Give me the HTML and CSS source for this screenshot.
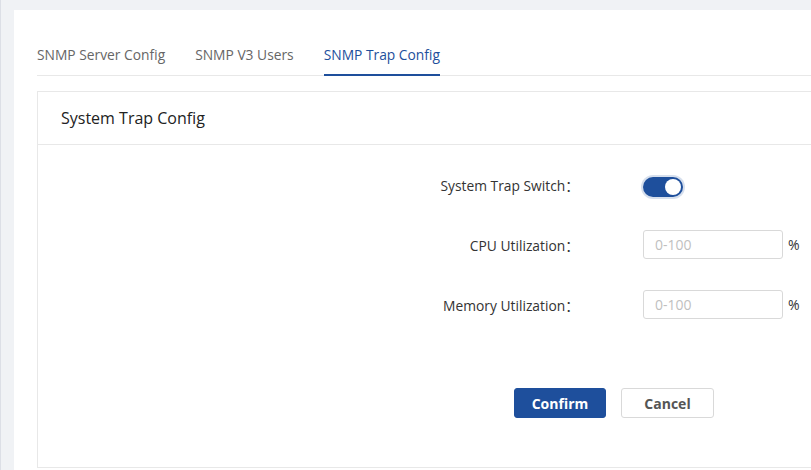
FILE: index.html
```html
<!DOCTYPE html>
<html lang="en">
<head>
<meta charset="UTF-8">
<meta name="viewport" content="width=device-width, initial-scale=1.0">
<title>SNMP Trap Config</title>
<link rel="stylesheet" href="styles.css">
</head>
<body>

<div class="page">
    <div class="card">
        <div class="tabs">
            <div class="tab">SNMP Server Config</div>
            <div class="tab">SNMP V3 Users</div>
            <div class="tab active">SNMP Trap Config</div>
        </div>

        <div class="panel">
            <div class="panel-header">System Trap Config</div>
            <form class="panel-body" id="trapForm">
                <div class="form-row">
                    <label>System Trap Switch：</label>
                    <div class="control">
                        <span class="switch on"><span class="knob"></span></span>
                    </div>
                </div>
                <div class="form-row">
                    <label for="cpu">CPU Utilization：</label>
                    <div class="control">
                        <input type="text" id="cpu" placeholder="0-100">
                        <span class="unit">%</span>
                    </div>
                </div>
                <div class="form-row">
                    <label for="memory">Memory Utilization：</label>
                    <div class="control">
                        <input type="text" id="memory" placeholder="0-100">
                        <span class="unit">%</span>
                    </div>
                </div>

                <div class="button-group">
                    <button type="button" class="btn primary">Confirm</button>
                    <button type="button" class="btn">Cancel</button>
                </div>
            </form>
        </div>
    </div>
</div>

</body>
</html>
```

FILE: styles.css
```css
body {
  margin: 0;
  font-family: "Open Sans", "Noto Sans CJK SC", sans-serif;
  font-size: 14px;
  color: #333;
  background-color: #f0f2f5;
  overflow: hidden;
}

.page {
  height: 470px;
  border-left: 1px solid #dcdfe6;
  padding: 10px 0 0 13px;
  box-sizing: border-box;
}

.card {
  width: 1000px;
  height: 460px;
  padding: 25px 0 0 23px;
  background-color: #fff;
  box-sizing: border-box;
}

.tabs {
  display: flex;
  gap: 30px;
  border-bottom: 1px solid #e8e8e8;
}

.tab {
  height: 39px;
  line-height: 40px;
  font-size: 13.8px;
  color: #666;
  border-bottom: 2px solid transparent;
  margin-bottom: -1px;
}

.tab.active {
  color: #1e4f9c;
  font-weight: 500;
  border-bottom-color: #1e4f9c;
}

.panel {
  margin-top: 15px;
  border: 1px solid #e8e8e8;
  height: 375px;
}

.panel-header {
  height: 52px;
  line-height: 52px;
  padding-left: 23px;
  font-size: 16px;
  color: #222;
  border-bottom: 1px solid #e8e8e8;
}

.panel-body {
  padding-top: 25px;
}

.form-row {
  display: flex;
  align-items: center;
  height: 29px;
  margin-bottom: 31px;
}

.form-row label {
  width: 541px;
  text-align: right;
  font-size: 13.8px;
  color: #333;
}

.control {
  display: flex;
  align-items: center;
  margin-left: 64px;
}

.switch {
  position: relative;
  display: inline-block;
  width: 40px;
  height: 20px;
  margin-top: 5px;
  border-radius: 10px;
  background-color: #1e4f9c;
  box-shadow: 0 0 0 2px rgba(30, 79, 156, 0.18);
}

.switch .knob {
  position: absolute;
  top: 2px;
  right: 2px;
  width: 16px;
  height: 16px;
  border-radius: 50%;
  background-color: #fff;
}

input[type="text"] {
  width: 140px;
  height: 29px;
  padding: 0 11px;
  border: 1px solid #d9d9d9;
  border-radius: 3px;
  box-sizing: border-box;
  font-family: inherit;
  font-size: 14px;
  color: #333;
}

input::placeholder {
  color: #bfbfbf;
}

.unit {
  margin-left: 5px;
  color: #333;
}

.button-group {
  display: flex;
  gap: 15px;
  margin: 69px 0 0 476px;
}

.btn {
  width: 93px;
  height: 30px;
  border: 1px solid #d9d9d9;
  border-radius: 3px;
  background-color: #fff;
  color: #555;
  font-family: inherit;
  font-size: 14px;
  font-weight: 700;
  cursor: pointer;
}

.btn.primary {
  width: 92px;
  background-color: #1e4f9c;
  border-color: #1e4f9c;
  color: #fff;
}
```
